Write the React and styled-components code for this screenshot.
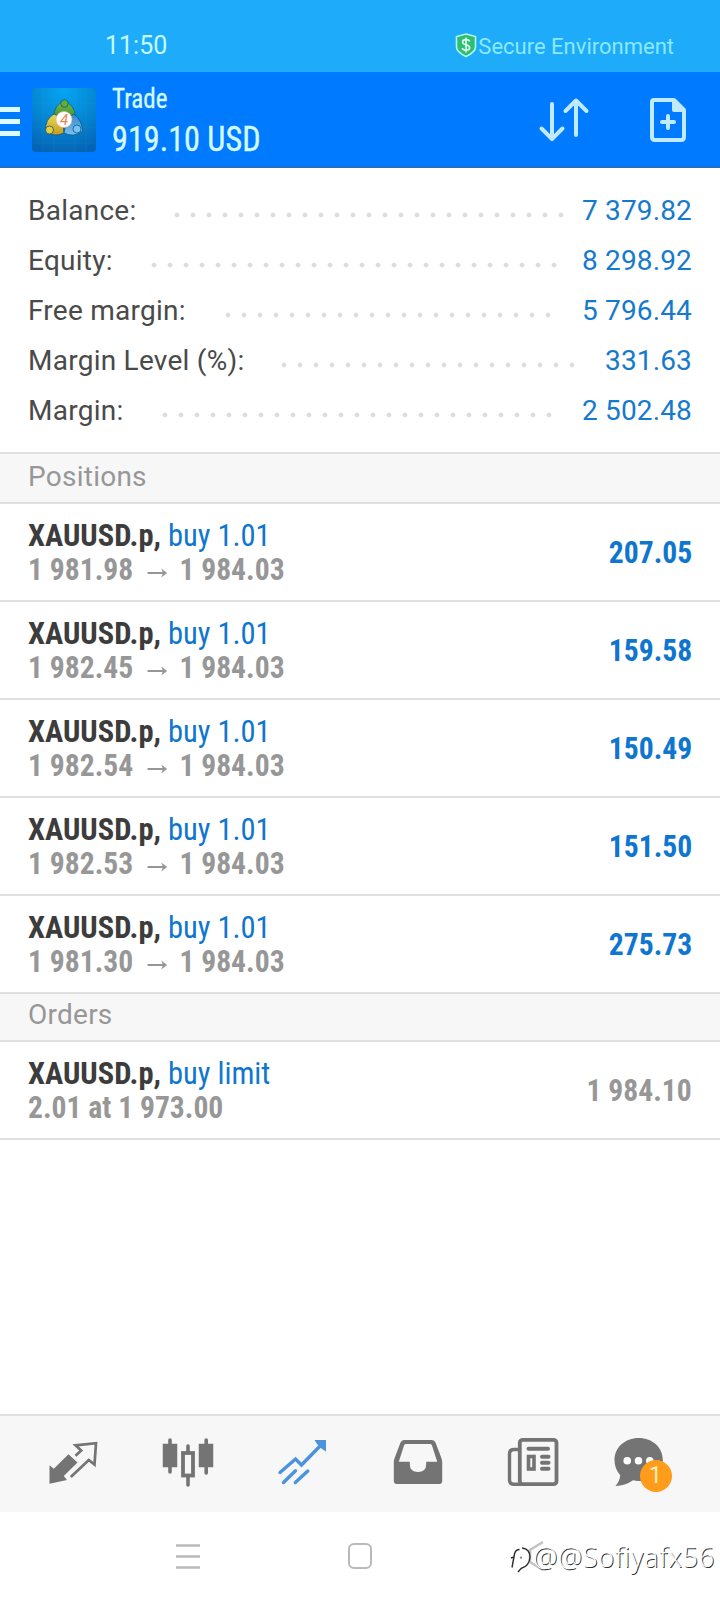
// Import: Dependencies
import React from "react";
import styled, { createGlobalStyle } from "styled-components";

// Data: account summary, start and end bound the dotted leader
const summary = [
  { label: "Balance:", value: "7 379.82", start: 175, end: 566 },
  { label: "Equity:", value: "8 298.92", start: 152, end: 559 },
  { label: "Free margin:", value: "5 796.44", start: 226, end: 553 },
  { label: "Margin Level (%):", value: "331.63", start: 282, end: 577 },
  { label: "Margin:", value: "2 502.48", start: 163, end: 554 },
];

// Data: open positions
const positions = [
  { open: "1 981.98", profit: "207.05" },
  { open: "1 982.45", profit: "159.58" },
  { open: "1 982.54", profit: "150.49" },
  { open: "1 982.53", profit: "151.50" },
  { open: "1 981.30", profit: "275.73" },
];

// Icon: Shield
const ShieldIcon = () => (
  <svg width="22" height="25" viewBox="0 0 22 25">
    <path
      d="M11 1 L20.5 3.5 V14 Q20.5 19 11 23.5 Q1.5 19 1.5 14 V3.5Z"
      fill="#2fbd74"
      stroke="#b5f5e6"
      strokeWidth="1.6"
    />
    <path
      d="M14.6 8.6 Q14 6.7 11 6.7 Q7.6 6.7 7.6 9.1 Q7.6 11.2 11 11.8 Q14.6 12.5 14.6 14.8 Q14.6 17.2 11 17.2 Q7.8 17.2 7.2 15 M11 4.4 V19.4"
      fill="none"
      stroke="#d5fbe8"
      strokeWidth="1.7"
    />
  </svg>
);

// Icon: App logo
const AppLogo = () => (
  <svg width="64" height="64" viewBox="0 0 64 64">
    <defs>
      <radialGradient id="sky" cx="50%" cy="5%" r="100%">
        <stop offset="0" stopColor="#05a5f2" />
        <stop offset="0.5" stopColor="#0587d3" />
        <stop offset="1" stopColor="#0562b4" />
      </radialGradient>
      <linearGradient id="green" x1="0" y1="0" x2="0" y2="1">
        <stop offset="0" stopColor="#7dbb45" />
        <stop offset="1" stopColor="#2e8b32" />
      </linearGradient>
      <linearGradient id="gold" x1="0" y1="0" x2="0" y2="1">
        <stop offset="0" stopColor="#e9da55" />
        <stop offset="1" stopColor="#c79a1c" />
      </linearGradient>
      <linearGradient id="blue" x1="0" y1="0" x2="0" y2="1">
        <stop offset="0" stopColor="#2f86cc" />
        <stop offset="1" stopColor="#7cc2ee" />
      </linearGradient>
    </defs>
    <rect width="64" height="64" rx="4" fill="url(#sky)" />
    <path
      d="M11 0V64 M22 0V64 M43 0V64 M54 0V64 M0 15H64 M0 39H64 M0 55H64"
      stroke="#36a6e8"
      strokeWidth="0.6"
      opacity="0.25"
    />
    <g stroke="#0e5b86" strokeWidth="0.8">
      <path d="M32 13Q43 17 43.500 29L36 33H28L21.500 29Q22 17 32 13Z" fill="url(#green)" />
      <path d="M22 26Q13 31 13.500 43Q22 50 32 45L30 30Z" fill="url(#gold)" />
      <path d="M42 26Q50 32 50.500 43Q42 50 32 45L35 30Z" fill="url(#blue)" />
      <circle cx="32.5" cy="15.500" r="3.800" fill="#5fae35" />
      <circle cx="17.500" cy="42" r="4" fill="#e7cd3a" />
      <circle cx="45" cy="41" r="4" fill="#74c3f2" />
    </g>
    <circle cx="32" cy="31.500" r="8" fill="#fff" stroke="#e2b89a" strokeWidth="0.7" />
    <text
      x="32"
      y="37"
      textAnchor="middle"
      fontFamily="Roboto, sans-serif"
      fontSize="15"
      fontStyle="italic"
      fill="#e08a60"
    >
      4
    </text>
  </svg>
);

// Icon: Sort arrows
const SortIcon = () => (
  <svg width="52" height="48" viewBox="0 0 52 48">
    <path
      d="M14 7V41 M3.500 31.500L14 42L24.500 31.500 M38 38V4.500 M27.500 14L38 3.500L48.500 14"
      fill="none"
      stroke="#bfeaff"
      strokeWidth="4"
      strokeLinecap="round"
      strokeLinejoin="round"
    />
  </svg>
);

// Icon: New order
const NewOrderIcon = () => (
  <svg width="36" height="44" viewBox="0 0 36 44">
    <path
      d="M4 2H24L34 12V39Q34 42 31 42H5Q2 42 2 39V4Q2 2 4 2Z"
      fill="none"
      stroke="#bfeaff"
      strokeWidth="4"
      strokeLinejoin="round"
    />
    <path d="M22 2H25L34 11V14H24Q22 14 22 12Z" fill="#bfeaff" />
    <path d="M18 18V30 M12 24H24" stroke="#bfeaff" strokeWidth="4" strokeLinecap="round" />
  </svg>
);

// Icon: Quotes
const QuotesIcon = () => (
  <NavIcon viewBox="0 0 64 64">
    <path
      d="M27.500 22.300L36.500 30.500L22.800 44L26 48L8.500 51.700V33.300L12.800 36.700Z"
      fill="#747474"
    />
    <path
      d="M34.500 23.700L40.200 18.600L34.500 13.300L55 11.200L53.500 32.500L47.800 28L29.800 45"
      fill="none"
      stroke="#747474"
      strokeWidth="2.700"
    />
  </NavIcon>
);

// Icon: Charts
const ChartsIcon = () => (
  <NavIcon viewBox="0 0 64 64">
    <g fill="#747474" stroke="#747474" strokeLinecap="round">
      <rect x="7.500" y="12.500" width="13" height="22" strokeWidth="1.500" />
      <rect x="43.500" y="12.500" width="13" height="22" strokeWidth="1.500" />
      <rect x="27" y="21" width="10" height="22.500" fill="none" strokeWidth="3.800" />
      <path
        d="M14 8V40 M50.200 8V41 M32 14V20 M32 44V53"
        fill="none"
        strokeWidth="3.600"
      />
    </g>
  </NavIcon>
);

// Icon: Trade
const TradeIcon = () => (
  <NavIcon viewBox="0 0 64 64">
    <path
      d="M9 40.500L24.500 27L30.500 33L52 11 M12.500 50.500L24.500 38.700 M24.300 50.500L36.800 39"
      fill="none"
      stroke="#4b93dc"
      strokeWidth="3.400"
      strokeLinecap="round"
    />
    <path d="M43.500 8H55V19.500L51 17L46 12Z" fill="#4b93dc" />
  </NavIcon>
);

// Icon: History
const HistoryIcon = () => (
  <NavIcon viewBox="0 0 64 64">
    <path
      fillRule="evenodd"
      d="M18 8H46Q48.500 8 49.500 10.500L55 25Q56.200 28 56.200 30V49Q56.200 52 53.200 52H10.800Q7.800 52 7.800 49V30Q7.800 28 9 25L14.500 10.500Q15.500 8 18 8Z M19.500 12Q18.500 12 18 13.500L12.800 29.700H23.800V32Q23.800 40 32 40Q40.200 40 40.200 32V29.700H51.200L46 13.500Q45.500 12 44.500 12Z"
      fill="#747474"
    />
  </NavIcon>
);

// Icon: News
const NewsIcon = () => (
  <NavIcon viewBox="0 0 64 64">
    <g fill="none" stroke="#747474" strokeLinecap="round">
      <rect x="18.800" y="7.800" width="36.700" height="44.400" rx="3" strokeWidth="3.800" />
      <path d="M17 17.500H13Q8.500 17.500 8.500 22V48Q8.500 52.200 13 52.200H20" strokeWidth="3.400" />
      <path d="M27.500 16.700H47 M41 24.700H47.500 M41 30.700H47.500 M41 36.700H47.500" strokeWidth="4" />
      <rect x="27.500" y="24.500" width="5.500" height="12.500" strokeWidth="3.600" />
    </g>
  </NavIcon>
);

// Icon: Chat
const ChatIcon = () => (
  <NavIcon viewBox="0 0 64 64">
    <path
      d="M22.700 6C36.500 6 46.800 15.500 46.800 28S36.500 49 22.700 49Q20 49 17 48.300Q9 54 -0.500 54Q4 49 4.200 43Q-1.500 37 -1.500 28C-1.500 15.500 9 6 22.700 6Z"
      fill="#747474"
    />
    <g fill="#fff">
      <circle cx="11.200" cy="28.700" r="3.800" />
      <circle cx="22.500" cy="28.700" r="3.800" />
      <circle cx="33.800" cy="28.700" r="3.800" />
    </g>
  </NavIcon>
);

// Icon: Watermark bubble
const BubbleIcon = () => (
  <svg width="24" height="38" viewBox="0 0 24 38">
    <path
      d="M3 30.500L5.500 17Q6.500 12.500 10.500 12.500 M2 21L5 20 M13 11Q21 12 21 20Q20.500 29 12 31.500L9 35"
      fill="none"
      stroke="#2d2d2d"
      strokeWidth="1.400"
    />
    <circle cx="12" cy="20.700" r="1.100" fill="#888" />
  </svg>
);

// page: Trade
function App() {
  return (
    <TradeContainer>
      <GlobalStyle />
      <StatusBar>
        <Clock>11:50</Clock>
        <Secure>
          <ShieldIcon />
          <span>Secure Environment</span>
        </Secure>
      </StatusBar>

      <AppBar>
        <MenuButton>
          <i />
          <i />
          <i />
        </MenuButton>
        <AppLogo />
        <AppTitle>
          <Title>Trade</Title>
          <Total>919.10 USD</Total>
        </AppTitle>
        <SortIcon />
        <NewOrderIcon />
      </AppBar>

      <Summary>
        {summary.map(({ label, value, start, end }) => (
          <SummaryRow key={label}>
            <SummaryLabel $width={start - 31}>{label}</SummaryLabel>
            <Leader $width={end - start + 5} />
            <SummaryValue>{value}</SummaryValue>
          </SummaryRow>
        ))}
      </Summary>

      <SectionTitle $height={50}>Positions</SectionTitle>
      {positions.map(({ open, profit }) => (
        <DealRow key={open}>
          <div>
            <DealName>
              <b>XAUUSD.p,</b> buy 1.01
            </DealName>
            <DealPrices>
              {open} <Arrow /> 1 984.03
            </DealPrices>
          </div>
          <DealValue>{profit}</DealValue>
        </DealRow>
      ))}

      <SectionTitle $height={48}>Orders</SectionTitle>
      <DealRow $last>
        <div>
          <DealName>
            <b>XAUUSD.p,</b> buy limit
          </DealName>
          <DealPrices>2.01 at 1 973.00</DealPrices>
        </div>
        <DealValue $muted>1 984.10</DealValue>
      </DealRow>

      <NavBar>
        <NavItem><QuotesIcon /></NavItem>
        <NavItem><ChartsIcon /></NavItem>
        <NavItem><TradeIcon /></NavItem>
        <NavItem><HistoryIcon /></NavItem>
        <NavItem><NewsIcon /></NavItem>
        <NavItem>
          <ChatIcon />
          <Badge>1</Badge>
        </NavItem>
      </NavBar>

      <SystemBar>
        <svg width="24" height="26" viewBox="0 0 24 26">
          <path d="M0 2.500H24 M0 13.500H24 M0 24.500H24" stroke="#b9b9b9" strokeWidth="2.400" />
        </svg>
        <HomeKey />
        <svg width="24" height="30" viewBox="0 0 24 30">
          <path d="M15 1L2 9V21L15 29" fill="none" stroke="#c4c4c4" strokeWidth="2.600" />
        </svg>
        <Watermark>
          <BubbleIcon />
          <span>@@Sofiyafx56</span>
        </Watermark>
      </SystemBar>
    </TradeContainer>
  );
}

// Export: App
export default App;

// Styled: GlobalStyle
const GlobalStyle = createGlobalStyle`
  body {
    margin: 0;
    background: #fff;
  }

  * {
    box-sizing: border-box;
  }

  svg {
    display: block;
    flex-shrink: 0;
  }
`;

// Styled: TradeContainer
const TradeContainer = styled.div`
  background: #fff;
  display: flex;
  flex-direction: column;
  font-family: Roboto, sans-serif;
  height: 1600px;
  overflow: hidden;
  width: 720px;
`;

// Styled: StatusBar
const StatusBar = styled.div`
  background: #1eabfa;
  color: #c4fbff;
  display: flex;
  height: 72px;
  justify-content: space-between;
  padding: 31px 46px 0 105px;
`;

// Styled: Clock
const Clock = styled.div`
  font-size: 25px;
  line-height: 30px;
`;

// Styled: Secure
const Secure = styled.div`
  color: #8be9ff;
  display: flex;
  font-size: 22px;
  gap: 1px;
  line-height: 31px;

  & svg {
    margin-top: 2px;
  }
`;

// Styled: AppBar
const AppBar = styled.div`
  align-items: center;
  background: #007aff;
  border-bottom: 2px solid #1b6fc4;
  display: flex;
  height: 96px;
  padding-top: 2px;

  & > svg:nth-of-type(2) {
    margin-right: 60px;
    margin-top: 2px;
  }

  & > svg:last-child {
    margin-right: 34px;
  }
`;

// Styled: MenuButton
const MenuButton = styled.div`
  display: flex;
  flex-direction: column;
  gap: 7px;
  margin-right: 12px;
  padding-top: 2px;
  width: 20px;

  & i {
    background: #dcfaff;
    height: 5px;
  }
`;

// Styled: AppTitle
const AppTitle = styled.div`
  color: #d3faff;
  flex: 1;
  font-family: "Roboto Condensed", Roboto, sans-serif;
  padding: 2px 0 0 16px;
`;

// Styled: Title
const Title = styled.div`
  -webkit-text-stroke: 0.300px;
  font-size: 27px;
  line-height: 36px;
  transform: scaleX(0.93);
  transform-origin: left;
`;

// Styled: Total
const Total = styled.div`
  -webkit-text-stroke: 0.400px;
  font-size: 35px;
  line-height: 45px;
  transform: scaleX(0.92);
  transform-origin: left;
`;

// Styled: Summary
const Summary = styled.div`
  height: 284px;
  padding: 17px 28px 0;
`;

// Styled: SummaryRow
const SummaryRow = styled.div`
  align-items: center;
  display: flex;
  font-size: 28px;
  height: 50px;
`;

// Styled: SummaryLabel
const SummaryLabel = styled.div`
  color: #4a4a4a;
  letter-spacing: 0.250px;
  width: ${(props) => props.$width}px;
`;

// Styled: Leader
const Leader = styled.div`
  background: radial-gradient(circle at 5px 3px, #dcdcdc 1.800px, transparent 2.800px) 0 0 / 16px 6px;
  height: 6px;
  margin-top: 10px;
  width: ${(props) => props.$width}px;
`;

// Styled: SummaryValue
const SummaryValue = styled.div`
  color: #157acd;
  flex: 1;
  letter-spacing: 0.150px;
  text-align: right;
`;

// Styled: SectionTitle
const SectionTitle = styled.div`
  background: #f7f7f7;
  border-top: 2px solid #e0e0e0;
  color: #979797;
  font-size: 28px;
  height: ${(props) => props.$height}px;
  letter-spacing: 0.250px;
  line-height: ${(props) => (props.$height === 50 ? 46 : 42)}px;
  padding-left: 28px;
`;

// Styled: DealRow
const DealRow = styled.div`
  align-items: center;
  border-bottom: ${(props) => (props.$last ? "2px solid #e0e0e0" : "none")};
  border-top: 2px solid #e0e0e0;
  display: flex;
  font-family: "Roboto Condensed", Roboto, sans-serif;
  height: ${(props) => (props.$last ? 100 : 98)}px;
  justify-content: space-between;
  padding: 0 28px;
`;

// Styled: DealName
const DealName = styled.div`
  color: #0f76cf;
  font-size: 32px;
  line-height: 34px;
  transform: scaleX(0.952);
  transform-origin: left;

  & b {
    color: #3c3c3c;
  }
`;

// Styled: DealPrices
const DealPrices = styled.div`
  align-items: center;
  color: #979797;
  display: flex;
  font-size: 32px;
  font-weight: 700;
  line-height: 34px;
  transform: scaleX(0.925);
  transform-origin: left;
`;

// Styled: Arrow
const Arrow = styled(({ className }) => (
  <svg className={className} width="22" height="12" viewBox="0 0 22 12">
    <path d="M0 6H19" stroke="#979797" strokeWidth="2" />
    <path d="M15 1.500L21.500 6L15 10.500L17 6Z" fill="#979797" />
  </svg>
))`
  margin: 8px 13px 0 15px;
`;

// Styled: DealValue
const DealValue = styled.div`
  color: ${(props) => (props.$muted ? "#979797" : "#0f76cf")};
  font-size: 32px;
  font-weight: 700;
  transform: scaleX(0.925);
  transform-origin: right;
`;

// Styled: NavBar
const NavBar = styled.div`
  background: #f7f7f7;
  border-top: 2px solid #e0e0e0;
  display: grid;
  grid-template-columns: repeat(6, 115px);
  height: 98px;
  margin-top: auto;
  padding-left: 15.500px;
`;

// Styled: NavItem
const NavItem = styled.div`
  display: grid;
  place-items: center;
  position: relative;
`;

// Styled: NavIcon
const NavIcon = styled.svg`
  height: 64px;
  overflow: visible;
  width: 64px;
`;

// Styled: Badge
const Badge = styled.span`
  background: #ff9c1c;
  border-radius: 50%;
  color: #fff0b8;
  font-size: 23px;
  height: 32px;
  left: 49px;
  line-height: 32px;
  position: absolute;
  text-align: center;
  top: 44px;
  width: 32px;
`;

// Styled: SystemBar
const SystemBar = styled.div`
  align-items: center;
  display: flex;
  height: 88px;
  padding: 0 0 0 176px;
  position: relative;
`;

// Styled: HomeKey
const HomeKey = styled.div`
  border: 2px solid #b9b9b9;
  border-radius: 6px;
  height: 26px;
  margin: 0 156px 0 148px;
  width: 24px;
`;

// Styled: Watermark
const Watermark = styled.div`
  align-items: center;
  color: #fff;
  display: flex;
  font-family: "Open Sans", "Noto Sans", sans-serif;
  font-size: 27px;
  font-weight: 300;
  letter-spacing: 0.850px;
  position: absolute;
  right: 5px;
  text-shadow: 1px 1px 0 #333;
`;
